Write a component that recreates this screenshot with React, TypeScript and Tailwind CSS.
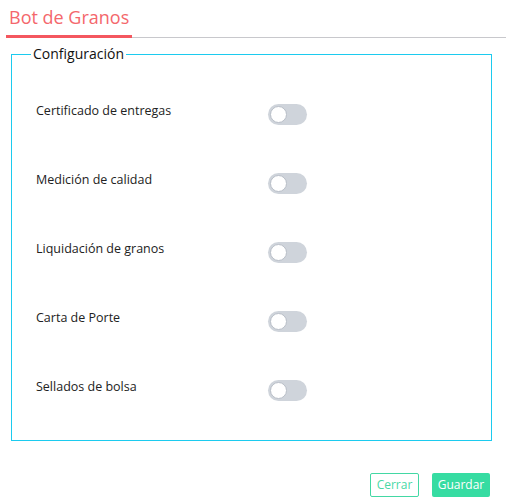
import React, { useState } from 'react';

const items = [
  'Certificado de entregas',
  'Medición de calidad',
  'Liquidación de granos',
  'Carta de Porte',
  'Sellados de bolsa',
];

function Toggle({ on, onChange }: { on: boolean; onChange: () => void }) {
  return (
    <button
      type="button"
      onClick={onChange}
      className={`relative w-[39px] h-[21px] rounded-full transition-colors ${on ? 'bg-[#34d9a0]' : 'bg-[#cfd4db]'}`}
    >
      <span
        className={`absolute top-[2px] w-[17px] h-[17px] rounded-full bg-white border border-[#b8bec7] transition-all ${on ? 'left-[20px]' : 'left-[2px]'}`}
      />
    </button>
  );
}

export default function App() {
  const [values, setValues] = useState<boolean[]>(items.map(() => false));

  return (
    <div className="w-[506px] h-[500px] bg-white font-['Open_Sans',sans-serif] text-[#222]">
      <div className="pl-[6px] pt-[5px]">
        <div className="flex border-b border-[#c8c8cc]">
          <div className="px-[3px] pb-[6px] border-b-[3px] border-[#f4575f] -mb-[1px] text-[18px] leading-[24px] text-[#f4676c]">
            Bot de Granos
          </div>
        </div>
      </div>

      <fieldset className="mx-[11px] mt-[7px] w-[481px] h-[396px] border border-[#1ccbef] pl-[19px] pr-[20px]">
        <legend className="px-[2px] text-[14px] leading-[18px] text-[#111]">Configuración</legend>
        <div className="flex flex-col gap-[48px] pt-[41px] pl-[5px]">
          {items.map((label, i) => (
            <div key={label} className="flex items-center h-[21px]">
              <span className="w-[232px] text-[12.5px] -mt-[6px] text-[#222]">{label}</span>
              <Toggle
                on={values[i]}
                onChange={() => setValues(v => v.map((x, j) => (j === i ? !x : x)))}
              />
            </div>
          ))}
        </div>
      </fieldset>

      <div className="flex justify-end gap-[13px] pr-[16px] mt-[32px]">
        <button
          type="button"
          className="w-[49px] h-[24px] border border-[#43d8a4] rounded-[2px] text-[12px] text-[#49d8a6] bg-white"
        >
          Cerrar
        </button>
        <button
          type="button"
          className="w-[58px] h-[24px] rounded-[2px] text-[12px] text-white bg-[#36dca2]"
        >
          Guardar
        </button>
      </div>
    </div>
  );
}
